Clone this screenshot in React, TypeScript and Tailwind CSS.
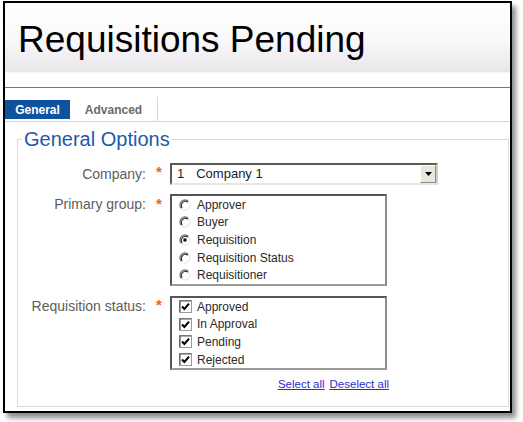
import React from "react";

const font = { fontFamily: '"Liberation Sans", Arial, sans-serif' };

const Radio = ({ checked }: { checked?: boolean }) => (
  <svg width="12" height="12" viewBox="0 0 12 12" className="shrink-0">
    <circle cx="6" cy="6" r="5" fill="#fff" />
    <path d="M9.54 2.46 A5 5 0 0 0 2.46 9.54" fill="none" stroke="#777" strokeWidth="1.3" />
    <path d="M8.8 3.2 A4 4 0 0 0 3.2 8.8" fill="none" stroke="#2a2a2a" strokeWidth="1.1" />
    <path d="M9.54 2.46 A5 5 0 0 1 2.46 9.54" fill="none" stroke="#e2e2e2" strokeWidth="1" />
    {checked && <circle cx="6" cy="6" r="1.8" fill="#111" />}
  </svg>
);

const Check = () => (
  <svg width="13" height="13" viewBox="0 0 13 13" className="shrink-0">
    <rect x="0.5" y="0.5" width="12" height="12" fill="#fff" stroke="#9a9a9a" />
    <path d="M1 12 V1 H12" fill="none" stroke="#555" strokeWidth="1.2" />
    <path d="M3 6.5 L5.4 9 L10 3.6" fill="none" stroke="#000" strokeWidth="2" />
  </svg>
);

const Star = ({ pt }: { pt: string }) => (
  <div className={`w-[24px] pl-[10px] ${pt}`}>
    <span className="block text-[15px] leading-none font-bold text-[#f0620c]">*</span>
  </div>
);

export default function App() {
  const groups = [
    { id: 1, label: "Approver" },
    { id: 2, label: "Buyer" },
    { id: 3, label: "Requisition", checked: true },
    { id: 4, label: "Requisition Status" },
    { id: 5, label: "Requisitioner" },
  ];
  const statuses = ["Approved", "In Approval", "Pending", "Rejected"];

  return (
    <div className="h-[422px] w-[523px] overflow-hidden bg-white pl-[3px] pt-[1px]" style={font}>
      <div className="flex h-[412px] w-[509px] flex-col border-2 border-black bg-white shadow-[4px_5px_5px_rgba(0,0,0,0.45)]">
        {/* title bar */}
        <div className="h-[67px] shrink-0 bg-linear-to-b from-white via-[#fbfafb] to-[#ebe7eb] pl-[13px] pt-[18px] shadow-[0_2px_2px_rgba(0,0,0,0.12)]">
          <h1 className="text-[37px] leading-none text-black">Requisitions Pending</h1>
        </div>

        <div className="mt-[17px] h-px shrink-0 bg-[#4a7fba]"></div>

        {/* tabs */}
        <div className="flex h-[34px] shrink-0 items-end border-b border-[#d6d6d6]">
          <div className="mb-[2px] flex h-[19px] w-[65px] items-center justify-center bg-[#0e52a0] text-[12px] font-bold text-white">
            General
          </div>
          <div className="mb-[2px] flex h-[19px] w-[87px] items-center justify-center text-[12px] font-bold text-[#6a6a6a]">
            Advanced
          </div>
          <div className="h-[24px] w-px bg-[#d8d8d8]"></div>
        </div>

        <fieldset className="mt-[2px] ml-[12px] mr-px h-[283px] border border-[#dadada] pt-[9px]">
          <legend className="ml-[4px] px-[2px] text-[20px] text-[#1d5aa8]">General Options</legend>

          <div className="flex h-[22px]">
            <div className="w-[128px] text-right text-[14px] leading-[22px] text-[#5e5e5e]">Company:</div>
            <Star pt="pt-[1px]" />
            <div className="flex h-[22px] w-[268px] items-center border-2 border-t-[#5a5a5a] border-l-[#5a5a5a] border-r-[#d4d0c8] border-b-[#e8e6e0] bg-white">
              <span className="ml-[5px] text-[13px] text-[#1c1c2c]">1</span>
              <span className="ml-[12px] flex-1 text-[13px] text-[#1c1c2c]">Company 1</span>
              <div className="flex h-[18px] w-[16px] items-center justify-center border border-t-white border-l-white border-r-[#8a8a8a] border-b-[#8a8a8a] bg-[#e9e6dc]">
                <svg width="7" height="4" viewBox="0 0 7 4">
                  <path d="M0 0 H7 L3.5 4 Z" fill="#000" />
                </svg>
              </div>
            </div>
          </div>

          <div className="mt-[9px] flex">
            <div className="w-[128px] pt-[2px] text-right text-[14px] leading-[17.6px] text-[#5e5e5e]">Primary group:</div>
            <Star pt="pt-[2px]" />
            <div className="w-[217px] border-2 border-t-[#555] border-l-[#555] border-r-[#8c8c8c] border-b-[#9a9a9a] bg-white">
              {groups.map((item) => (
                <div key={item.id} className="flex h-[17.6px] items-center pl-[7px]">
                  <Radio checked={item.checked} />
                  <span className="ml-[6px] text-[12px] text-[#2a2a2a]">{item.label}</span>
                </div>
              ))}
            </div>
          </div>

          <div className="mt-[10px] flex">
            <div className="w-[128px] pt-[2px] text-right text-[14px] leading-[17.6px] text-[#5e5e5e]">Requisition status:</div>
            <Star pt="pt-[1px]" />
            <div className="w-[217px] border-2 border-t-[#555] border-l-[#555] border-r-[#8c8c8c] border-b-[#9a9a9a] bg-white">
              {statuses.map((s) => (
                <div key={s} className="flex h-[17.6px] items-center pl-[7px]">
                  <Check />
                  <span className="ml-[5px] text-[12px] text-[#2a2a2a]">{s}</span>
                </div>
              ))}
            </div>
          </div>

          <div className="mt-[7px] flex w-[371px] justify-end gap-[5px] text-[11.5px] leading-[14px] text-[#2b2bd0] underline">
            <a href="#">Select all</a>
            <a href="#">Deselect all</a>
          </div>
        </fieldset>
      </div>
    </div>
  );
}
